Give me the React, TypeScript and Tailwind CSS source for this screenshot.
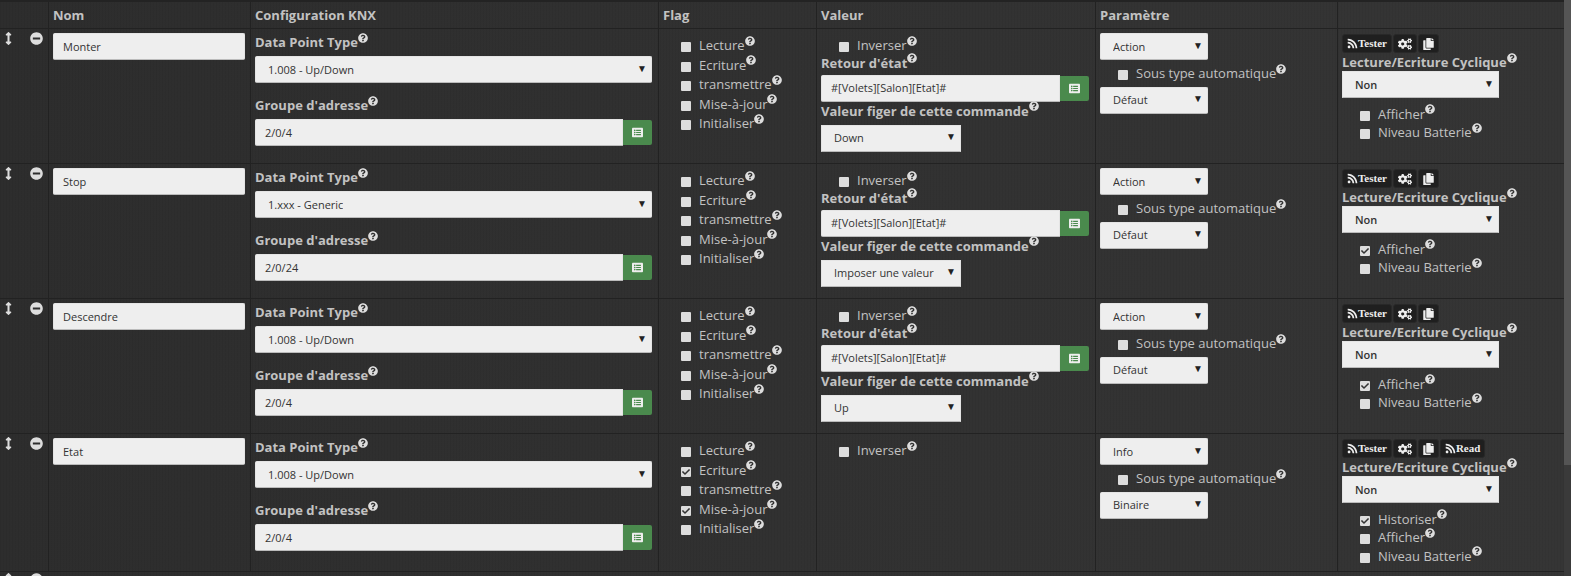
import { FaArrowsAltV, FaCheck, FaCogs, FaCopy, FaListAlt, FaMinusCircle, FaQuestionCircle, FaRss } from 'react-icons/fa';

type Row = {
  name: string;
  dpt: string;
  address: string;
  flags: string[];
  value?: string;
  kind: string;
  subtype: string;
  show?: boolean;
  info?: boolean;
};

const flagNames = ['Lecture', 'Ecriture', 'transmettre', 'Mise-à-jour', 'Initialiser'];

const rows: Row[] = [
  { name: 'Monter', dpt: '1.008 - Up/Down', address: '2/0/4', flags: [], value: 'Down', kind: 'Action', subtype: 'Défaut' },
  { name: 'Stop', dpt: '1.xxx - Generic', address: '2/0/24', flags: [], value: 'Imposer une valeur', kind: 'Action', subtype: 'Défaut', show: true },
  { name: 'Descendre', dpt: '1.008 - Up/Down', address: '2/0/4', flags: [], value: 'Up', kind: 'Action', subtype: 'Défaut', show: true },
  { name: 'Etat', dpt: '1.008 - Up/Down', address: '2/0/4', flags: ['Ecriture', 'Mise-à-jour'], kind: 'Info', subtype: 'Binaire', info: true },
];

const gridCols = 'grid grid-cols-[49px_202px_408px_158px_279px_242px_226px]';
const cellBorder = 'border-r border-[#222]';

function Help() {
  return <FaQuestionCircle className="mb-[6px] inline-block h-[10px] w-[10px] -translate-y-[3px] text-[#ddd]" />;
}

function Label({ text }: { text: string }) {
  return (
    <div className="h-[19px] whitespace-nowrap text-[13px] leading-[19px] font-bold text-[#c2c2c2]">
      {text}
      <Help />
    </div>
  );
}

function Field({ value, className }: { value: string; className: string }) {
  return (
    <div className={`flex h-[27px] items-center border border-[#e4e4e4] border-b-[#bbb] bg-[#eee] px-[9px] pt-px text-[11px] text-[#333] ${className}`}>{value}</div>
  );
}

function Select({ value, className }: { value: string; className: string }) {
  return (
    <div className={`flex h-[27px] items-center justify-between border border-[#e4e4e4] border-b-[#bbb] bg-[#eee] pr-[4px] pl-[12px] pt-px text-[11px] text-[#333] ${className}`}>
      <span className="truncate">{value}</span>
      <span className="mb-[4px] shrink-0 text-[10px] text-[#222]">▼</span>
    </div>
  );
}

function Check({ label, checked, compact }: { label: string; checked?: boolean; compact?: boolean }) {
  return (
    <div className={`flex items-center whitespace-nowrap text-[13px] text-[#c2c2c2] ${compact ? 'h-[18.5px]' : 'h-[19.5px]'}`}>
      <span className="mt-[3px] mr-[8px] flex h-[10px] w-[10px] items-center justify-center rounded-[1px] bg-[#ddd]">
        {checked && <FaCheck className="h-[8px] w-[8px] text-[#333]" />}
      </span>
      <span>
        {label}
        <Help />
      </span>
    </div>
  );
}

function AddressInput({ value, className }: { value: string; className: string }) {
  return (
    <div className={`flex ${className}`}>
      <Field value={value} className="min-w-0 flex-1 rounded-l-[2px]" />
      <div className="flex h-[25px] w-[29px] items-center justify-center self-center rounded-r-[2px] bg-[#4a8a4d]">
        <FaListAlt className="h-[11px] w-[11px] text-[#eee]" />
      </div>
    </div>
  );
}

function ActionButton({ children }: { children: React.ReactNode }) {
  return (
    <div className="flex h-[19px] items-center rounded-[3px] border border-[#282828] bg-[#1f1f1f] px-[4px] font-['Liberation_Serif',serif] text-[11px] font-bold text-[#eee]">
      {children}
    </div>
  );
}

function CommandRow({ row }: { row: Row }) {
  return (
    <div className={`${gridCols} border-b border-[#222] ${row.info ? 'h-[138px]' : 'h-[135px]'}`}>
      <div className={`${cellBorder} flex items-start gap-[18px] pt-[3px] pl-[5px]`}>
        <FaArrowsAltV className="h-[13px] w-[7px] text-[#ddd]" />
        <FaMinusCircle className="h-[13px] w-[13px] text-[#ddd]" />
      </div>
      <div className={`${cellBorder} pt-[4px] pl-[4px]`}>
        <Field value={row.name} className="w-[192px] rounded-[2px]" />
      </div>
      <div className={`${cellBorder} pt-[4px] pl-[4px]`}>
        <Label text="Data Point Type" />
        <Select value={row.dpt} className="mt-[4px] w-[397px] rounded-[2px]" />
        <div className="mt-[13px]">
          <Label text="Groupe d'adresse" />
        </div>
        <AddressInput value={row.address} className="mt-[4px] w-[397px]" />
      </div>
      <div className={`${cellBorder} pt-[7px] pl-[22px]`}>
        {flagNames.map((flag) => (
          <Check key={flag} label={flag} checked={row.flags.includes(flag)} />
        ))}
      </div>
      <div className={`${cellBorder} pt-[7px] pl-[4px]`}>
        <div className="pl-[18px]">
          <Check label="Inverser" />
        </div>
        {row.value && (
          <>
            <div className="-mt-[2px]">
              <Label text="Retour d'état" />
            </div>
            <AddressInput value="#[Volets][Salon][Etat]#" className="mt-[2px] w-[268px]" />
            <Label text="Valeur figer de cette commande" />
            <Select value={row.value} className="mt-[4px] w-[140px]" />
          </>
        )}
      </div>
      <div className={`${cellBorder} pt-[4px] pl-[4px]`}>
        <Select value={row.kind} className="w-[108px] rounded-[2px]" />
        <div className="mt-[4px] pl-[18px]">
          <Check label="Sous type automatique" />
        </div>
        <Select value={row.subtype} className="mt-[3px] w-[108px] rounded-[2px]" />
      </div>
      <div className="pt-[5px] pl-[4px]">
        <div className="flex gap-px">
          <ActionButton>
            <FaRss className="h-[11px] w-[11px]" />
            Tester
          </ActionButton>
          <ActionButton>
            <FaCogs className="h-[14px] w-[14px]" />
          </ActionButton>
          <ActionButton>
            <FaCopy className="h-[12px] w-[11px]" />
          </ActionButton>
          {row.info && (
            <ActionButton>
              <FaRss className="h-[11px] w-[11px]" />
              Read
            </ActionButton>
          )}
        </div>
        <Label text="Lecture/Ecriture Cyclique" />
        <Select value="Non" className="-mt-px w-[157px] font-semibold" />
        <div className="mt-[7px] pl-[18px]">
          {row.info && <Check label="Historiser" checked compact />}
          <Check label="Afficher" checked={row.show} compact />
          <Check label="Niveau Batterie" compact />
        </div>
      </div>
    </div>
  );
}

export default function App() {
  return (
    <div className="flex h-[576px] overflow-hidden bg-[#2f2f2f] font-['Open_Sans',sans-serif]">
      <div className="w-[1564px] shrink-0 bg-[image:repeating-linear-gradient(90deg,#0000000a_0_1px,transparent_1px_3px),linear-gradient(90deg,#2d2d2d,#353535)]">
        <div className="h-[2px] bg-[#232323]" />
        <div className={`${gridCols} h-[27px] border-b border-[#222] text-[13px] leading-[26px] font-bold text-[#c2c2c2]`}>
          <div className={cellBorder} />
          <div className={`${cellBorder} pl-[4px]`}>Nom</div>
          <div className={`${cellBorder} pl-[4px]`}>Configuration KNX</div>
          <div className={`${cellBorder} pl-[4px]`}>Flag</div>
          <div className={`${cellBorder} pl-[4px]`}>Valeur</div>
          <div className={`${cellBorder} pl-[4px]`}>Paramètre</div>
          <div />
        </div>
        {rows.map((row) => (
          <CommandRow key={row.name} row={row} />
        ))}
        <div className="flex gap-[18px] pt-[1px] pl-[5px]">
          <FaArrowsAltV className="h-[13px] w-[7px] text-[#ddd]" />
          <FaMinusCircle className="h-[13px] w-[13px] text-[#ddd]" />
        </div>
      </div>
      <div className="w-[7px] bg-[#3a3a3a]">
        <div className="h-[465px] bg-[#555]" />
      </div>
    </div>
  );
}
